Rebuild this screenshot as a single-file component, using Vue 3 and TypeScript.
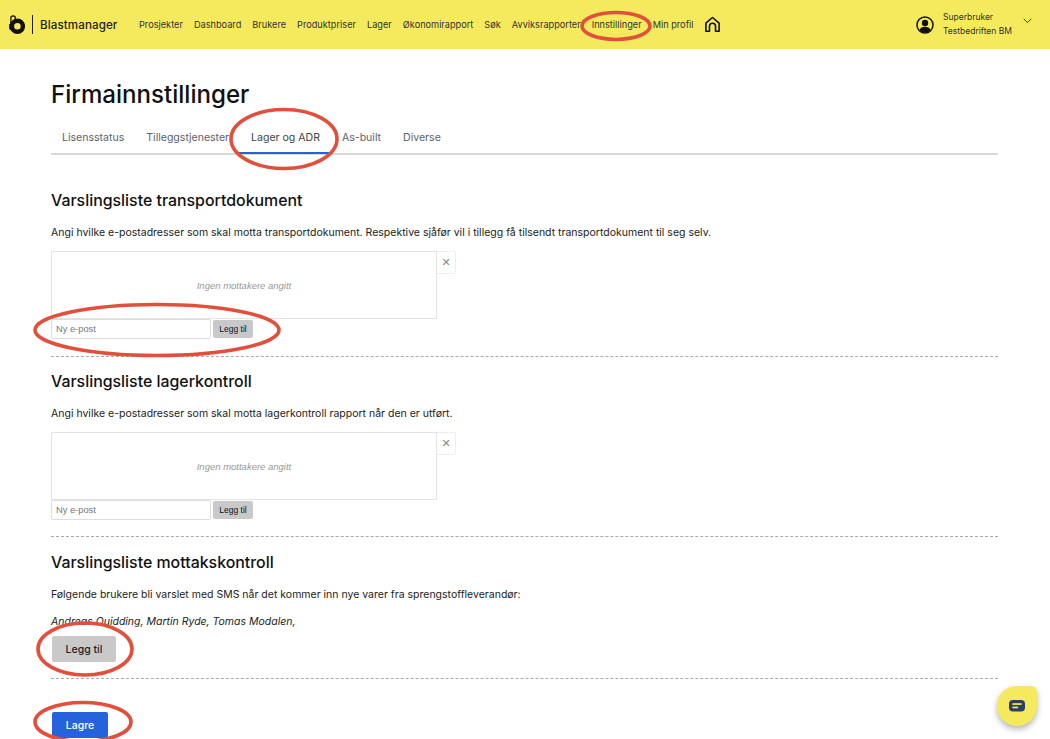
<script setup lang="ts">
const navItems: string[] = ['Prosjekter', 'Dashboard', 'Brukere', 'Produktpriser', 'Lager', 'Økonomirapport', 'Søk', 'Avviksrapporter', 'Innstillinger', 'Min profil']
const tabs: string[] = ['Lisensstatus', 'Tilleggstjenester', 'Lager og ADR', 'As-built', 'Diverse']
const rings = [
  { cx: 616, cy: 26, rx: 34, ry: 13.5 },
  { cx: 284, cy: 139, rx: 53, ry: 29.5 },
  { cx: 157, cy: 330, rx: 122, ry: 25.5 },
  { cx: 85, cy: 649, rx: 47, ry: 26 },
  { cx: 83, cy: 722, rx: 48, ry: 19.5 },
]
</script>

<template>
  <div class="page">
    <header class="topbar">
      <div class="brand">
        <svg class="logo" width="16" height="19" viewBox="0 0 16 19">
          <circle cx="8.4" cy="11.2" r="5.5" fill="none" stroke="#111" stroke-width="4.4" />
          <path d="M1.9 10V3a2.2 2.2 0 0 1 4.4 0v3" fill="none" stroke="#111" stroke-width="1.3" />
          <path d="M0.2 9h4v8L.2 14z" fill="#111" />
        </svg>
        <span class="brand-rule"></span>
        <span class="brand-name">Blastmanager</span>
      </div>
      <nav class="nav">
        <a v-for="item in navItems" :key="item" class="nav-item">{{ item }}</a>
        <svg class="home" width="17" height="17" viewBox="0 0 18 18" fill="none" stroke="#111" stroke-width="1.7" stroke-linejoin="round">
          <path d="M2 16.2V7.6L9 1.6l7 6v8.6h-3.8v-5.4a3.2 3.2 0 0 0-6.4 0v5.4z" />
        </svg>
      </nav>
      <div class="user">
        <svg width="18" height="18" viewBox="0 0 18 18">
          <circle cx="9" cy="9" r="8" fill="none" stroke="#111" stroke-width="1.5" />
          <circle cx="9" cy="7" r="3.2" fill="#111" />
          <path d="M3.4 14.2c1-2.6 3-3.4 5.6-3.4s4.6.8 5.6 3.4A8 8 0 0 1 9 16.6a8 8 0 0 1-5.6-2.4z" fill="#111" />
        </svg>
        <div class="user-text">
          <span>Superbruker</span>
          <span>Testbedriften BM</span>
        </div>
        <svg class="chev" width="9" height="6" viewBox="0 0 9 6" fill="none" stroke="#333" stroke-width="1">
          <path d="M.7.8l3.8 3.8L8.3.8" />
        </svg>
      </div>
    </header>

    <main class="content">
      <h1>Firmainnstillinger</h1>
      <div class="tabs">
        <a v-for="tab in tabs" :key="tab" class="tab" :class="{ active: tab === 'Lager og ADR' }">{{ tab }}</a>
      </div>

      <section class="block first">
        <h2>Varslingsliste transportdokument</h2>
        <p class="lead">Angi hvilke e-postadresser som skal motta transportdokument. Respektive sjåfør vil i tillegg få tilsendt transportdokument til seg selv.</p>
        <div class="list-row">
          <div class="list-box">Ingen mottakere angitt</div>
          <button class="clear">✕</button>
        </div>
        <div class="add-row">
          <input class="mail" placeholder="Ny e-post" />
          <button class="small">Legg til</button>
        </div>
      </section>

      <section class="block">
        <h2>Varslingsliste lagerkontroll</h2>
        <p class="lead">Angi hvilke e-postadresser som skal motta lagerkontroll rapport når den er utført.</p>
        <div class="list-row">
          <div class="list-box">Ingen mottakere angitt</div>
          <button class="clear">✕</button>
        </div>
        <div class="add-row">
          <input class="mail" placeholder="Ny e-post" />
          <button class="small">Legg til</button>
        </div>
      </section>

      <section class="block last">
        <h2>Varslingsliste mottakskontroll</h2>
        <p class="lead">Følgende brukere bli varslet med SMS når det kommer inn nye varer fra sprengstoffleverandør:</p>
        <p class="names">Andreas Quidding, Martin Ryde, Tomas Modalen,</p>
        <button class="grey">Legg til</button>
      </section>

      <button class="save">Lagre</button>
    </main>

    <button class="chat" aria-label="Chat">
      <svg width="16" height="12" viewBox="0 0 16 12">
        <rect width="16" height="11.6" rx="4" fill="#2c3e63" />
        <rect x="3.4" y="3.2" width="9.2" height="1.7" fill="#f5ea5e" />
        <rect x="3.4" y="6.6" width="5.8" height="1.7" fill="#f5ea5e" />
      </svg>
    </button>

    <svg class="marks" width="1050" height="739" viewBox="0 0 1050 739" fill="none">
      <ellipse v-for="(r, i) in rings" :key="i" :cx="r.cx" :cy="r.cy" :rx="r.rx" :ry="r.ry" stroke="#e24f3c" stroke-width="3.6" />
    </svg>
  </div>
</template>

<style>
html, body { margin: 0; background: #fff; overflow: hidden; }
</style>

<style scoped>
.page {
  position: relative;
  width: 1050px;
  height: 739px;
  overflow: hidden;
  font-family: Inter, "Liberation Sans", sans-serif;
  color: #111;
}
.topbar {
  height: 49px;
  background: #f5ea5e;
  display: flex;
  align-items: center;
  padding: 0 18px 0 9px;
  box-sizing: border-box;
}
.brand { display: flex; align-items: center; width: 130px; flex: none; }
.logo { display: block; }
.brand-rule { width: 1px; height: 19px; background: #222; margin: 0 7px 0 7px; }
.brand-name { font-size: 11.6px; font-weight: 500; letter-spacing: .1px; color: #222; }
.nav { display: flex; align-items: center; gap: 11px; flex: 1; }
.nav-item { font-size: 9.2px; color: #333; white-space: nowrap; }
.user { display: flex; align-items: center; gap: 9px; }
.user-text { display: flex; flex-direction: column; gap: 5px; font-size: 8.5px; line-height: 9px; color: #333; width: 69px; white-space: nowrap; }
.chev { margin: -7px 0 0 2px; }
.content { padding: 0 52px 0 51px; }
h1 { margin: 31px 0 0; font-size: 24.1px; line-height: 29px; font-weight: 500; color: #111; }
.tabs { display: flex; margin-top: 15px; border-bottom: 2px solid #d9d9d9; padding-left: 11px; gap: 22px; height: 29px; }
.tab { font-size: 10.55px; color: #5b6270; line-height: 28px; height: 29px; white-space: nowrap; box-sizing: border-box; }
.tab.active { color: #444; border-bottom: 2px solid #2563d8; padding: 0 12px; margin: 0 -12px; height: 30px; }
.block { border-bottom: 1px dashed #aaa; height: 180px; box-sizing: border-box; }
.block.first { margin-top: 37px; height: 165px; }
.block + .block { padding-top: 16px; }
.block.last { height: 142px; padding-top: 17px; }
h2 { margin: 0; font-size: 15.9px; line-height: 18px; font-weight: 500; color: #111; }
.lead { margin: 16px 0 0; font-size: 10.5px; line-height: 13px; color: #222; }
.list-row { display: flex; align-items: flex-start; margin-top: 12px; }
.list-box {
  width: 386px; height: 68px; box-sizing: border-box;
  border: 1px solid #e3e3e3; display: flex; align-items: center; justify-content: center;
  font: italic 9.5px "Liberation Sans", sans-serif; color: #999; padding-top: 1px;
}
.clear {
  width: 19px; height: 23px; padding: 0; border: 1px solid #eee; border-left: 0; border-radius: 0 2px 2px 0;
  background: #fff; color: #888; font: 11px "DejaVu Sans", sans-serif;
}
.add-row { display: flex; align-items: center; gap: 2px; }
.mail {
  width: 160px; height: 20px; box-sizing: border-box; padding: 0 4px; border: 1px solid #ddd; border-radius: 2px;
  font: 9.3px "Liberation Sans", sans-serif; outline: none; background: #fff;
}
.mail::placeholder { color: #777; }
.small {
  width: 40px; height: 18px; padding: 0; border: 0; border-radius: 2px; background: #c9c9c9;
  font: 8.5px "Liberation Sans", sans-serif; color: #111;
}
.names { margin: 14px 0 0; font-size: 10.5px; line-height: 13px; font-style: italic; color: #222; }
.grey {
  display: block; margin: 8px 0 0 1px; width: 64px; height: 26px; padding: 0; border: 0; border-radius: 2px;
  background: #c9c9c9; color: #222; font: 500 10.5px Inter, sans-serif;
}
.save {
  display: block; margin: 33px 0 0 1px; width: 56px; height: 26px; padding: 0; border: 0; border-radius: 2px;
  background: #2563dc; color: #fff; font: 500 10.5px Inter, sans-serif;
}
.chat {
  position: absolute; left: 997px; top: 686px; width: 40px; height: 40px; padding: 0; border: 0;
  border-radius: 50%;
  border-top-right-radius: 6px;
  background: #f5ea5e; box-shadow: 0 3px 6px rgba(0,0,0,.3);
  display: flex; align-items: center; justify-content: center;
}
.marks { position: absolute; inset: 0; pointer-events: none; }
</style>
